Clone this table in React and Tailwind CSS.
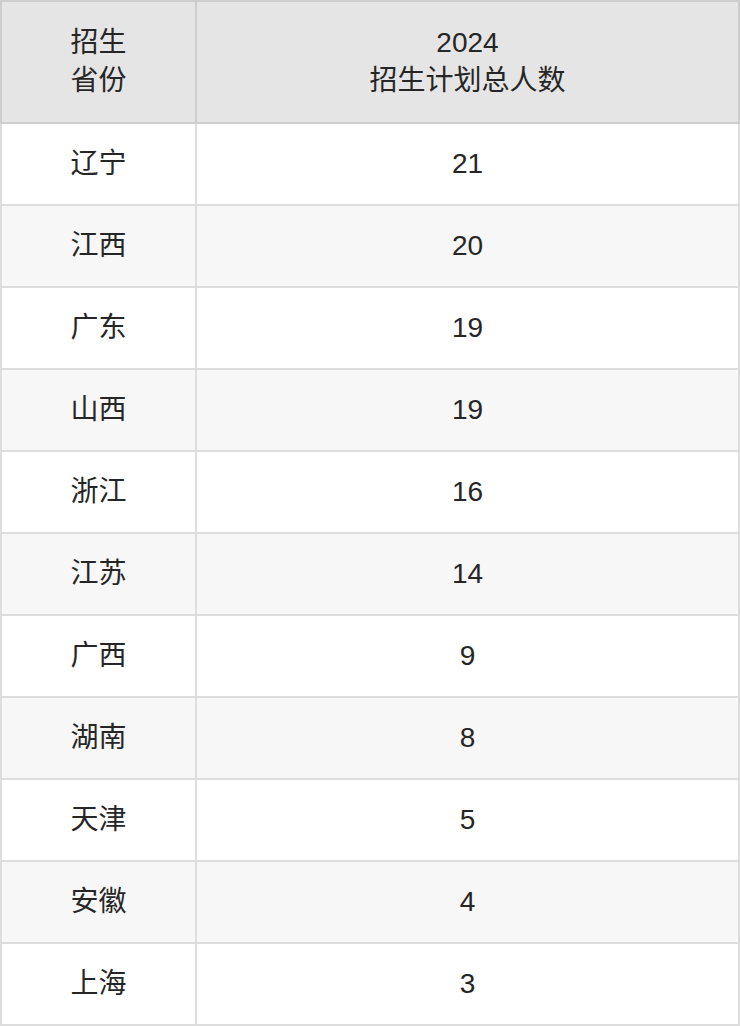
const rows = [
  ["辽宁", "21"],
  ["江西", "20"],
  ["广东", "19"],
  ["山西", "19"],
  ["浙江", "16"],
  ["江苏", "14"],
  ["广西", "9"],
  ["湖南", "8"],
  ["天津", "5"],
  ["安徽", "4"],
  ["上海", "3"],
];

export default function App() {
  return (
    <div className="w-[740px] bg-white" style={{ fontFamily: '"Liberation Sans", Arial, "Noto Sans CJK SC", sans-serif' }}>
      <table className="w-[740px] border-collapse table-fixed text-[28px] leading-[38px] text-[#262626]">
        <colgroup>
          <col className="w-[195px]" />
          <col />
        </colgroup>
        <thead>
          <tr className="h-[122px] bg-[#e5e5e5]">
            <th className="border-2 border-[#cdcdcd] font-normal text-center align-middle">
              招生<br />省份
            </th>
            <th className="border-2 border-[#cdcdcd] font-normal text-center align-middle">
              2024<br />招生计划总人数
            </th>
          </tr>
        </thead>
        <tbody>
          {rows.map(([p, n], i) => (
            <tr key={p} className={`h-[82px] ${i % 2 === 1 ? "bg-[#f7f7f7]" : "bg-white"}`}>
              <td className="border-2 border-[#dddddd] text-center align-middle">{p}</td>
              <td className="border-2 border-[#dddddd] text-center align-middle">{n}</td>
            </tr>
          ))}
        </tbody>
      </table>
    </div>
  );
}
